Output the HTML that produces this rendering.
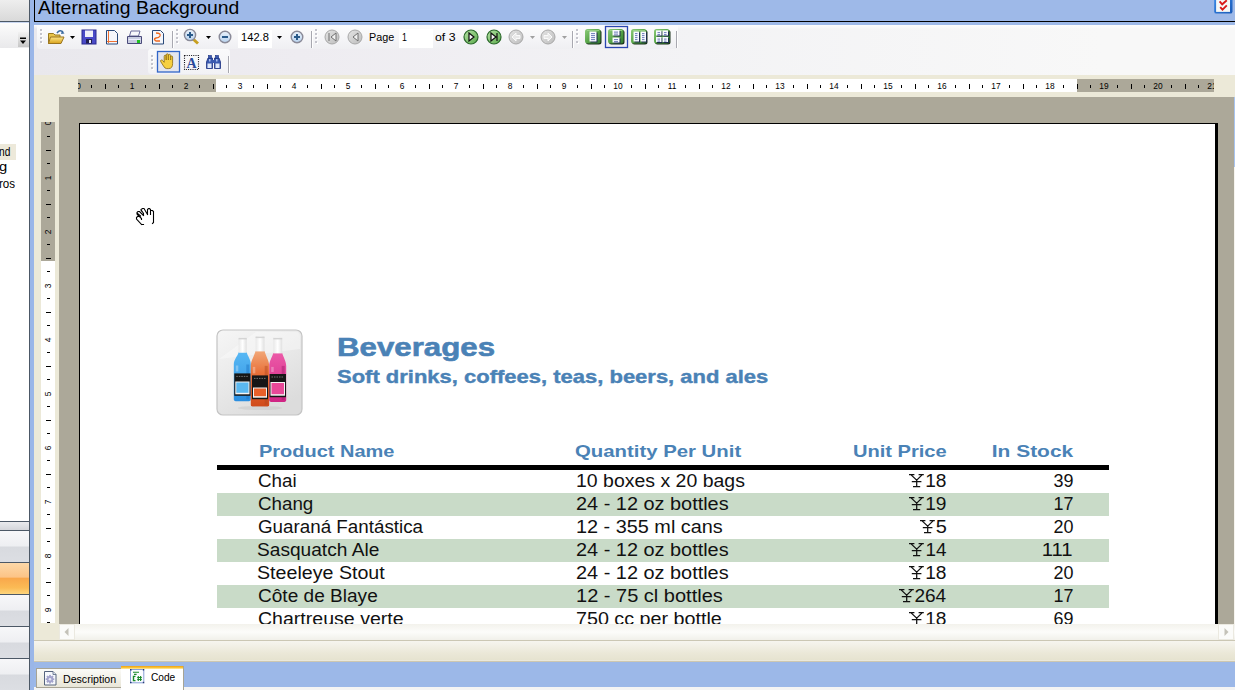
<!DOCTYPE html>
<html><head><meta charset="utf-8">
<style>
*{margin:0;padding:0;box-sizing:border-box}
html,body{width:1235px;height:690px;overflow:hidden;background:#ece9d8;font-family:"Liberation Sans",sans-serif;position:relative}
.a{position:absolute}
.t{position:absolute;white-space:nowrap;line-height:1}
svg{position:absolute;overflow:visible}
.lbtn{position:absolute;left:0;width:29px;height:31px;background:linear-gradient(#f7f7f9 0%,#eeeff2 48%,#d8dadf 52%,#dcdee3 100%)}
</style></head><body>

<div class="a" style="left:0px;top:0px;width:29px;height:21px;background:linear-gradient(#eeeeee,#d9d9d9);"></div>
<div class="a" style="left:0px;top:21px;width:29px;height:1px;background:#4c5866;"></div>
<div class="a" style="left:0px;top:22px;width:29px;height:1px;background:#c8d6f0;"></div>
<div class="a" style="left:0px;top:23px;width:29px;height:25px;background:linear-gradient(#fcfcfc,#e9e9eb);"></div>
<div class="a" style="left:18px;top:32px;width:11px;height:15px;background:linear-gradient(#f2f2f2,#c6c6c6);"></div>
<svg style="left:18px;top:32px" width="11" height="15"><rect x="2" y="5.5" width="6" height="1.5" fill="#000"/><path d="M2 8.5 H8 L5 12 Z" fill="#000"/></svg>
<div class="a" style="left:0px;top:48px;width:29px;height:473px;background:#fff;"></div>
<div class="a" style="left:0px;top:144px;width:16px;height:16px;background:#ede9da;"></div>
<div id="ln1" class="t" style="left:-0.86px;top:145.84px;font-size:12.3px;font-weight:normal;color:#000;font-family:'Liberation Sans',sans-serif;transform:scaleX(0.8264);transform-origin:0 0;">nd</div>
<div id="ln2" class="t" style="left:-0.86px;top:161.34px;font-size:12.3px;font-weight:normal;color:#000;font-family:'Liberation Sans',sans-serif;transform:scaleX(1.2000);transform-origin:0 0;">g</div>
<div id="ln3" class="t" style="left:-0.86px;top:178.15px;font-size:12.3px;font-weight:normal;color:#000;font-family:'Liberation Sans',sans-serif;transform:scaleX(0.9417);transform-origin:0 0;">ros</div>
<div class="a" style="left:0px;top:521px;width:29px;height:169px;background:#4c5866;"></div>
<div class="a" style="left:0px;top:522px;width:29px;height:8px;background:linear-gradient(#e9eaed,#d3d5da);"></div>
<div class="lbtn" style="top:531px"></div>
<div class="lbtn" style="top:595px"></div>
<div class="lbtn" style="top:627px"></div>
<div class="lbtn" style="top:659px"></div>
<div class="a" style="left:0px;top:563px;width:29px;height:31px;background:linear-gradient(#fdd8a8 0%,#fcc487 45%,#f9a84c 50%,#fbbb55 80%,#fdd57d 100%);"></div>
<div class="a" style="left:29px;top:0px;width:1px;height:690px;background:#4c5866;"></div>
<div class="a" style="left:30px;top:0px;width:4px;height:690px;background:#9ab6e8;"></div>
<div class="a" style="left:34px;top:0px;width:1201px;height:25px;background:#9eb9e8;"></div>
<div class="a" style="left:34px;top:0px;width:1px;height:22px;background:#000;"></div>
<div class="a" style="left:34px;top:21px;width:1201px;height:1px;background:#000;"></div>
<div id="title" class="t" style="left:37.70px;top:-0.53px;font-size:18.5px;font-weight:normal;color:#000;font-family:'Liberation Sans',sans-serif;transform:scaleX(1.0471);transform-origin:0 0;">Alternating Background</div>
<svg style="left:1214px;top:0px" width="20" height="16">
<defs><linearGradient id="ck" x1="0" y1="0" x2="1" y2="1"><stop offset="0" stop-color="#3a8ae8"/><stop offset="1" stop-color="#1a5ab8"/></linearGradient></defs>
<rect x="0.2" y="-4" width="18.3" height="17.6" rx="2.2" fill="url(#ck)"/>
<rect x="2.1" y="-3" width="13.9" height="14.9" fill="#f6f8f6"/>
<path d="M5.6 1.4 L8.2 4.3 L12.8 0.3 M6.2 7.2 L8.5 9.6 L12.8 5.4" stroke="#d81818" stroke-width="1.9" fill="none"/>
</svg>
<div class="a" style="left:34px;top:25px;width:1201px;height:50px;background:linear-gradient(to right,#e9e8ed 0%,#eeecf1 22%,#f3f3f5 55%,#f8f8f8 89%,#f8f8f8 100%);"></div>
<div class="a" style="left:34px;top:25px;width:1201px;height:4px;background:linear-gradient(#fdfdfd,rgba(255,255,255,0));"></div>
<div class="a" style="left:37px;top:25px;width:641px;height:24px;background:linear-gradient(#fcfcfd,#f6f6f8 50%,#efeff2);border-radius:0 0 3px 3px"></div>
<div class="a" style="left:148px;top:49px;width:82px;height:25px;background:linear-gradient(#fafafb,#f2f2f5);border-radius:3px"></div>
<svg style="left:0;top:0" width="1235" height="80"><defs><linearGradient id="gg" x1="0" y1="0" x2="1" y2="1"><stop offset="0" stop-color="#e4e4e4"/><stop offset="1" stop-color="#bdbdbd"/></linearGradient><linearGradient id="gr" x1="0" y1="0" x2="1" y2="1"><stop offset="0" stop-color="#b8e4a8"/><stop offset="1" stop-color="#5aaa4a"/></linearGradient><linearGradient id="gb" x1="0" y1="0" x2="0" y2="1"><stop offset="0" stop-color="#eaf2fb"/><stop offset="1" stop-color="#b8d2ee"/></linearGradient><linearGradient id="gf" x1="0" y1="0" x2="0" y2="1"><stop offset="0" stop-color="#fde68a"/><stop offset="1" stop-color="#d9a21a"/></linearGradient><linearGradient id="gl" x1="0" y1="0" x2="1" y2="1"><stop offset="0" stop-color="#8ccc7a"/><stop offset=".5" stop-color="#5aa64a"/><stop offset="1" stop-color="#2f7a30"/></linearGradient></defs><rect x="41" y="30" width="2" height="2" fill="#fff"/><rect x="40" y="29" width="2" height="2" fill="#c4c4cc"/><rect x="41" y="34" width="2" height="2" fill="#fff"/><rect x="40" y="33" width="2" height="2" fill="#c4c4cc"/><rect x="41" y="38" width="2" height="2" fill="#fff"/><rect x="40" y="37" width="2" height="2" fill="#c4c4cc"/><rect x="41" y="42" width="2" height="2" fill="#fff"/><rect x="40" y="41" width="2" height="2" fill="#c4c4cc"/><path d="M48.5 33.5 h5 l1.5 1.5 h5 v8.5 h-11.5 z" fill="#e8c44a" stroke="#9a7a20" stroke-width="1"/><path d="M50.5 37 h13.5 l-3 6.5 h-12.5 z" fill="url(#gf)" stroke="#9a7420" stroke-width="1"/><path d="M57 33 q3 -4 6 -1" stroke="#3a6aa0" stroke-width="1.6" fill="none"/><path d="M62 30.5 l2.5 3 l-3.5 .5 z" fill="#3a6aa0"/><path d="M70 36 h5 l-2.5 3 z" fill="#000"/><rect x="82" y="30" width="14" height="14" fill="#4a4ac8" stroke="#2a2a90" stroke-width="1"/><rect x="85" y="30.5" width="8" height="6.5" fill="#f0f0f8"/><rect x="86" y="39" width="6" height="4.5" fill="#202050"/><rect x="89" y="40" width="2" height="3" fill="#e8e8f0"/><path d="M106.5 30.5 h8 l3 3 v10.5 h-11 z" fill="#f4f6fb" stroke="#2a4a7a" stroke-width="1"/><rect x="108" y="31" width="1" height="12" fill="#f07030"/><rect x="107" y="41" width="10" height="1" fill="#f07030"/><path d="M131 31 h9 l-1.5 5 h-9 z" fill="#f8f8fc" stroke="#6a6a9a" stroke-width="1"/><path d="M127.5 36.5 h14 v7 h-14 z" fill="#c8cce0" stroke="#4a4a7a" stroke-width="1"/><rect x="128.5" y="39" width="12" height="1" fill="#eef"/><rect x="137" y="40" width="3" height="3" fill="#20c020"/><path d="M152.5 30.5 h8 l3 3 v10.5 h-11 z" fill="#f4f6fb" stroke="#2a4a7a" stroke-width="1"/><path d="M156 33 q5 0 4 3 q-1 2 -4 2 q-3 1 0 3 h4" stroke="#f06a20" stroke-width="1.4" fill="none"/><rect x="172" y="31" width="1" height="17" fill="#a8a8b0"/><rect x="173" y="31" width="1" height="17" fill="#fff"/><rect x="177" y="30" width="2" height="2" fill="#fff"/><rect x="176" y="29" width="2" height="2" fill="#c4c4cc"/><rect x="177" y="34" width="2" height="2" fill="#fff"/><rect x="176" y="33" width="2" height="2" fill="#c4c4cc"/><rect x="177" y="38" width="2" height="2" fill="#fff"/><rect x="176" y="37" width="2" height="2" fill="#c4c4cc"/><rect x="177" y="42" width="2" height="2" fill="#fff"/><rect x="176" y="41" width="2" height="2" fill="#c4c4cc"/><path d="M193 39 l5 4.5" stroke="#c8a020" stroke-width="3"/><circle cx="190" cy="35" r="5.6" fill="url(#gb)" stroke="#8a8a98" stroke-width="1.4"/><path d="M190 32 v6 M187 35 h6" stroke="#2a5a8a" stroke-width="2"/><path d="M206 36 h5 l-2.5 3 z" fill="#000"/><circle cx="225" cy="37" r="5.8" fill="url(#gb)" stroke="#8a8a98" stroke-width="1.4"/><path d="M222 37 h6" stroke="#2a5a8a" stroke-width="2"/><rect x="238" y="30" width="34" height="18" fill="#fff"/><path d="M277 36 h5 l-2.5 3 z" fill="#000"/><circle cx="297" cy="37" r="5.8" fill="url(#gb)" stroke="#8a8a98" stroke-width="1.4"/><path d="M297 34 v6 M294 37 h6" stroke="#2a5a8a" stroke-width="2"/><rect x="311" y="31" width="1" height="17" fill="#a8a8b0"/><rect x="312" y="31" width="1" height="17" fill="#fff"/><rect x="316" y="30" width="2" height="2" fill="#fff"/><rect x="315" y="29" width="2" height="2" fill="#c4c4cc"/><rect x="316" y="34" width="2" height="2" fill="#fff"/><rect x="315" y="33" width="2" height="2" fill="#c4c4cc"/><rect x="316" y="38" width="2" height="2" fill="#fff"/><rect x="315" y="37" width="2" height="2" fill="#c4c4cc"/><rect x="316" y="42" width="2" height="2" fill="#fff"/><rect x="315" y="41" width="2" height="2" fill="#c4c4cc"/><circle cx="332" cy="37" r="7" fill="url(#gg)" stroke="#a8a8a8" stroke-width="1"/><path d="M329 33 v8 M336 33 l-5 4 l5 4 z" stroke="#707070" stroke-width="1" fill="#f0f0f0"/><circle cx="355" cy="37" r="7" fill="url(#gg)" stroke="#a8a8a8" stroke-width="1"/><path d="M358 33 l-5 4 l5 4 z" stroke="#707070" stroke-width="1" fill="#f0f0f0"/><rect x="399" y="29" width="34" height="19" fill="#fff"/><circle cx="471" cy="37" r="7" fill="url(#gr)" stroke="#2c6a2c" stroke-width="1.2"/><path d="M469 33 l5 4 l-5 4 z" stroke="#101010" stroke-width="1.2" fill="#f4f4f4"/><circle cx="494" cy="37" r="7" fill="url(#gr)" stroke="#2c6a2c" stroke-width="1.2"/><path d="M491 33 l5 4 l-5 4 z M497 33 v8" stroke="#101010" stroke-width="1.2" fill="#f4f4f4"/><circle cx="516" cy="37" r="7" fill="url(#gg)" stroke="#a8a8a8" stroke-width="1"/><path d="M512 37 l4 -4 v2.5 h4 v3 h-4 v2.5 z" fill="#e8e8e8" stroke="#fafafa" stroke-width="1"/><path d="M530 36 h5 l-2.5 3 z" fill="#a0a0a0"/><circle cx="548" cy="37" r="7" fill="url(#gg)" stroke="#a8a8a8" stroke-width="1"/><path d="M552 37 l-4 -4 v2.5 h-4 v3 h4 v2.5 z" fill="#e8e8e8" stroke="#fafafa" stroke-width="1"/><path d="M562 36 h5 l-2.5 3 z" fill="#a0a0a0"/><rect x="572" y="31" width="1" height="17" fill="#a8a8b0"/><rect x="573" y="31" width="1" height="17" fill="#fff"/><rect x="577" y="30" width="2" height="2" fill="#fff"/><rect x="576" y="29" width="2" height="2" fill="#c4c4cc"/><rect x="577" y="34" width="2" height="2" fill="#fff"/><rect x="576" y="33" width="2" height="2" fill="#c4c4cc"/><rect x="577" y="38" width="2" height="2" fill="#fff"/><rect x="576" y="37" width="2" height="2" fill="#c4c4cc"/><rect x="577" y="42" width="2" height="2" fill="#fff"/><rect x="576" y="41" width="2" height="2" fill="#c4c4cc"/><rect x="605.5" y="26.5" width="22" height="21" fill="#f2f2f6" stroke="#2a46b0" stroke-width="1.3"/><rect x="586" y="30" width="15.5" height="14.5" rx="2.5" fill="#1a301a"/><rect x="585" y="29" width="15.5" height="14.5" rx="2.5" fill="url(#gl)"/><path d="M587 30.5 H599" stroke="#a8dc98" stroke-width="1" opacity=".7"/><rect x="590.5" y="32.5" width="7" height="10" fill="#1c2c4c"/><rect x="589.5" y="31.5" width="7" height="10" fill="#f8faff"/><rect x="591.0" y="33.1" width="4" height="1" fill="#6a7ab8"/><rect x="591.0" y="35.1" width="4" height="1" fill="#6a7ab8"/><rect x="591.0" y="37.1" width="4" height="1" fill="#6a7ab8"/><rect x="591.0" y="39.1" width="4" height="1" fill="#6a7ab8"/><rect x="609" y="30" width="15.5" height="14.5" rx="2.5" fill="#1a301a"/><rect x="608" y="29" width="15.5" height="14.5" rx="2.5" fill="url(#gl)"/><path d="M610 30.5 H622" stroke="#a8dc98" stroke-width="1" opacity=".7"/><rect x="613.5" y="31" width="7" height="5.5" fill="#1c2c4c"/><rect x="612.5" y="30" width="7" height="5.5" fill="#f8faff"/><rect x="614.0" y="31.6" width="4" height="1" fill="#6a7ab8"/><rect x="614.0" y="33.6" width="4" height="1" fill="#6a7ab8"/><rect x="613.5" y="38.5" width="7" height="5" fill="#1c2c4c"/><rect x="612.5" y="37.5" width="7" height="5" fill="#f8faff"/><rect x="614.0" y="39.1" width="4" height="1" fill="#6a7ab8"/><rect x="614.0" y="41.1" width="4" height="1" fill="#6a7ab8"/><rect x="632" y="30" width="15.5" height="14.5" rx="2.5" fill="#1a301a"/><rect x="631" y="29" width="15.5" height="14.5" rx="2.5" fill="url(#gl)"/><path d="M633 30.5 H645" stroke="#a8dc98" stroke-width="1" opacity=".7"/><rect x="634.5" y="32.5" width="5.5" height="10" fill="#1c2c4c"/><rect x="633.5" y="31.5" width="5.5" height="10" fill="#f8faff"/><rect x="635.0" y="33.1" width="2.5" height="1" fill="#6a7ab8"/><rect x="635.0" y="35.1" width="2.5" height="1" fill="#6a7ab8"/><rect x="635.0" y="37.1" width="2.5" height="1" fill="#6a7ab8"/><rect x="635.0" y="39.1" width="2.5" height="1" fill="#6a7ab8"/><rect x="641.5" y="32.5" width="5.5" height="10" fill="#1c2c4c"/><rect x="640.5" y="31.5" width="5.5" height="10" fill="#f8faff"/><rect x="642.0" y="33.1" width="2.5" height="1" fill="#6a7ab8"/><rect x="642.0" y="35.1" width="2.5" height="1" fill="#6a7ab8"/><rect x="642.0" y="37.1" width="2.5" height="1" fill="#6a7ab8"/><rect x="642.0" y="39.1" width="2.5" height="1" fill="#6a7ab8"/><rect x="655" y="30" width="15.5" height="14.5" rx="2.5" fill="#1a301a"/><rect x="654" y="29" width="15.5" height="14.5" rx="2.5" fill="url(#gl)"/><path d="M656 30.5 H668" stroke="#a8dc98" stroke-width="1" opacity=".7"/><rect x="657" y="31.5" width="5.5" height="5" fill="#1c2c4c"/><rect x="656" y="30.5" width="5.5" height="5" fill="#f8faff"/><rect x="657.5" y="32.1" width="2.5" height="1" fill="#6a7ab8"/><rect x="657.5" y="34.1" width="2.5" height="1" fill="#6a7ab8"/><rect x="663.5" y="31.5" width="5.5" height="5" fill="#1c2c4c"/><rect x="662.5" y="30.5" width="5.5" height="5" fill="#f8faff"/><rect x="664.0" y="32.1" width="2.5" height="1" fill="#6a7ab8"/><rect x="664.0" y="34.1" width="2.5" height="1" fill="#6a7ab8"/><rect x="657" y="38" width="5.5" height="5" fill="#1c2c4c"/><rect x="656" y="37" width="5.5" height="5" fill="#f8faff"/><rect x="657.5" y="38.6" width="2.5" height="1" fill="#6a7ab8"/><rect x="657.5" y="40.6" width="2.5" height="1" fill="#6a7ab8"/><rect x="663.5" y="38" width="5.5" height="5" fill="#1c2c4c"/><rect x="662.5" y="37" width="5.5" height="5" fill="#f8faff"/><rect x="664.0" y="38.6" width="2.5" height="1" fill="#6a7ab8"/><rect x="664.0" y="40.6" width="2.5" height="1" fill="#6a7ab8"/><rect x="676" y="31" width="1" height="17" fill="#a8a8b0"/><rect x="677" y="31" width="1" height="17" fill="#fff"/><rect x="152" y="56" width="2" height="2" fill="#fff"/><rect x="151" y="55" width="2" height="2" fill="#c4c4cc"/><rect x="152" y="60" width="2" height="2" fill="#fff"/><rect x="151" y="59" width="2" height="2" fill="#c4c4cc"/><rect x="152" y="64" width="2" height="2" fill="#fff"/><rect x="151" y="63" width="2" height="2" fill="#c4c4cc"/><rect x="152" y="68" width="2" height="2" fill="#fff"/><rect x="151" y="67" width="2" height="2" fill="#c4c4cc"/><rect x="157.5" y="51.5" width="22" height="20.5" fill="#e4e6ee" stroke="#3166c8" stroke-width="1.3"/><path d="M163.5 66 L160.8 61.8 Q160 60.3 161.3 60 Q162.3 59.8 163.2 61 L164.2 62.3 V56.3 Q164.2 55.2 165.2 55.2 Q166.2 55.2 166.2 56.3 V60 V55 Q166.2 53.8 167.3 53.8 Q168.4 53.8 168.4 55 V60 V55.5 Q168.4 54.4 169.5 54.4 Q170.6 54.4 170.6 55.5 V60 V57 Q170.6 56 171.6 56 Q172.6 56 172.6 57 V63.5 Q172.6 68.6 168.6 68.6 H166.6 Q164.8 68.6 163.5 66 Z" fill="#f6d040" stroke="#8a6a10" stroke-width=".8"/><path d="M166.2 59.5 V56 M168.4 59.5 V55.5 M170.6 59.5 V57" stroke="#b89020" stroke-width=".6"/><rect x="184.5" y="55.5" width="14" height="14" fill="none" stroke="#101018" stroke-width="1.1" stroke-dasharray="1 1.2"/><text x="191.5" y="68" font-family="Liberation Serif" font-weight="bold" font-size="14" fill="#2a4a9a" text-anchor="middle">A</text><path d="M206.5 68.5 V62 L208 58 H212.5 V68.5 Z M214.5 68.5 V58 H219 L220.5 62 V68.5 Z" fill="#3a5ab0" stroke="#1a3080" stroke-width=".8"/><rect x="208.5" y="55.5" width="3" height="3" fill="#3a5ab0" stroke="#1a3080" stroke-width=".6"/><rect x="215.5" y="55.5" width="3" height="3" fill="#3a5ab0" stroke="#1a3080" stroke-width=".6"/><rect x="212" y="60" width="3" height="3" fill="#3a5ab0"/><rect x="207.5" y="63.5" width="4" height="4.5" fill="#dfe8f8"/><rect x="215.5" y="63.5" width="4" height="4.5" fill="#dfe8f8"/><rect x="209" y="59" width="1.5" height="2.5" fill="#a8c0f0"/><rect x="216" y="59" width="1.5" height="2.5" fill="#a8c0f0"/><rect x="228" y="56" width="1" height="17" fill="#a8a8b0"/><rect x="229" y="56" width="1" height="17" fill="#fff"/></svg>
<div id="zoomtxt" class="t" style="left:240.63px;top:32.25px;font-size:11px;font-weight:normal;color:#000;font-family:'Liberation Sans',sans-serif;transform:scaleX(1.0127);transform-origin:0 0;">142.8</div>
<div id="pagetxt" class="t" style="left:368.73px;top:32.25px;font-size:11px;font-weight:normal;color:#000;font-family:'Liberation Sans',sans-serif;transform:scaleX(0.9809);transform-origin:0 0;">Page</div>
<div id="pgnum" class="t" style="left:402.23px;top:32.25px;font-size:11px;font-weight:normal;color:#000;font-family:'Liberation Sans',sans-serif;transform:scaleX(0.8000);transform-origin:0 0;">1</div>
<div id="oftxt" class="t" style="left:435.23px;top:32.25px;font-size:11px;font-weight:normal;color:#000;font-family:'Liberation Sans',sans-serif;transform:scaleX(1.1176);transform-origin:0 0;">of 3</div>
<div class="a" style="left:34px;top:75px;width:1201px;height:22px;background:#ece9d8;"></div>
<div class="a" style="left:78px;top:79px;width:1136px;height:13px;background:#fff;"></div>
<div class="a" style="left:78px;top:79px;width:138px;height:13px;background:#aca899;"></div>
<div class="a" style="left:1077px;top:79px;width:137px;height:13px;background:#aca899;"></div>
<svg style="left:0;top:0" width="1235" height="690"><rect x="91" y="85" width="1" height="3" fill="#000"/><rect x="105" y="84" width="1" height="5" fill="#000"/><rect x="118" y="85" width="1" height="3" fill="#000"/><rect x="145" y="85" width="1" height="3" fill="#000"/><rect x="159" y="84" width="1" height="5" fill="#000"/><rect x="172" y="85" width="1" height="3" fill="#000"/><rect x="199" y="85" width="1" height="3" fill="#000"/><rect x="213" y="84" width="1" height="5" fill="#000"/><rect x="226" y="85" width="1" height="3" fill="#000"/><rect x="253" y="85" width="1" height="3" fill="#000"/><rect x="267" y="84" width="1" height="5" fill="#000"/><rect x="280" y="85" width="1" height="3" fill="#000"/><rect x="307" y="85" width="1" height="3" fill="#000"/><rect x="321" y="84" width="1" height="5" fill="#000"/><rect x="334" y="85" width="1" height="3" fill="#000"/><rect x="361" y="85" width="1" height="3" fill="#000"/><rect x="375" y="84" width="1" height="5" fill="#000"/><rect x="388" y="85" width="1" height="3" fill="#000"/><rect x="415" y="85" width="1" height="3" fill="#000"/><rect x="429" y="84" width="1" height="5" fill="#000"/><rect x="442" y="85" width="1" height="3" fill="#000"/><rect x="469" y="85" width="1" height="3" fill="#000"/><rect x="483" y="84" width="1" height="5" fill="#000"/><rect x="496" y="85" width="1" height="3" fill="#000"/><rect x="523" y="85" width="1" height="3" fill="#000"/><rect x="537" y="84" width="1" height="5" fill="#000"/><rect x="550" y="85" width="1" height="3" fill="#000"/><rect x="577" y="85" width="1" height="3" fill="#000"/><rect x="591" y="84" width="1" height="5" fill="#000"/><rect x="604" y="85" width="1" height="3" fill="#000"/><rect x="631" y="85" width="1" height="3" fill="#000"/><rect x="645" y="84" width="1" height="5" fill="#000"/><rect x="658" y="85" width="1" height="3" fill="#000"/><rect x="685" y="85" width="1" height="3" fill="#000"/><rect x="699" y="84" width="1" height="5" fill="#000"/><rect x="712" y="85" width="1" height="3" fill="#000"/><rect x="739" y="85" width="1" height="3" fill="#000"/><rect x="753" y="84" width="1" height="5" fill="#000"/><rect x="766" y="85" width="1" height="3" fill="#000"/><rect x="793" y="85" width="1" height="3" fill="#000"/><rect x="807" y="84" width="1" height="5" fill="#000"/><rect x="820" y="85" width="1" height="3" fill="#000"/><rect x="847" y="85" width="1" height="3" fill="#000"/><rect x="861" y="84" width="1" height="5" fill="#000"/><rect x="874" y="85" width="1" height="3" fill="#000"/><rect x="901" y="85" width="1" height="3" fill="#000"/><rect x="915" y="84" width="1" height="5" fill="#000"/><rect x="928" y="85" width="1" height="3" fill="#000"/><rect x="955" y="85" width="1" height="3" fill="#000"/><rect x="969" y="84" width="1" height="5" fill="#000"/><rect x="982" y="85" width="1" height="3" fill="#000"/><rect x="1009" y="85" width="1" height="3" fill="#000"/><rect x="1023" y="84" width="1" height="5" fill="#000"/><rect x="1036" y="85" width="1" height="3" fill="#000"/><rect x="1063" y="85" width="1" height="3" fill="#000"/><rect x="1077" y="84" width="1" height="5" fill="#000"/><rect x="1090" y="85" width="1" height="3" fill="#000"/><rect x="1117" y="85" width="1" height="3" fill="#000"/><rect x="1131" y="84" width="1" height="5" fill="#000"/><rect x="1144" y="85" width="1" height="3" fill="#000"/><rect x="1171" y="85" width="1" height="3" fill="#000"/><rect x="1185" y="84" width="1" height="5" fill="#000"/><rect x="1198" y="85" width="1" height="3" fill="#000"/></svg>
<div class="t" style="left:131.8px;top:80.5px;font-size:9.5px;color:#000;transform:translateX(-50%) scaleX(0.88)">1</div>
<div class="t" style="left:185.8px;top:80.5px;font-size:9.5px;color:#000;transform:translateX(-50%) scaleX(0.88)">2</div>
<div class="t" style="left:239.8px;top:80.5px;font-size:9.5px;color:#000;transform:translateX(-50%) scaleX(0.88)">3</div>
<div class="t" style="left:293.8px;top:80.5px;font-size:9.5px;color:#000;transform:translateX(-50%) scaleX(0.88)">4</div>
<div class="t" style="left:347.8px;top:80.5px;font-size:9.5px;color:#000;transform:translateX(-50%) scaleX(0.88)">5</div>
<div class="t" style="left:401.8px;top:80.5px;font-size:9.5px;color:#000;transform:translateX(-50%) scaleX(0.88)">6</div>
<div class="t" style="left:455.8px;top:80.5px;font-size:9.5px;color:#000;transform:translateX(-50%) scaleX(0.88)">7</div>
<div class="t" style="left:509.8px;top:80.5px;font-size:9.5px;color:#000;transform:translateX(-50%) scaleX(0.88)">8</div>
<div class="t" style="left:563.8px;top:80.5px;font-size:9.5px;color:#000;transform:translateX(-50%) scaleX(0.88)">9</div>
<div class="t" style="left:617.8px;top:80.5px;font-size:9.5px;color:#000;transform:translateX(-50%) scaleX(0.88)">10</div>
<div class="t" style="left:671.8px;top:80.5px;font-size:9.5px;color:#000;transform:translateX(-50%) scaleX(0.88)">11</div>
<div class="t" style="left:725.8px;top:80.5px;font-size:9.5px;color:#000;transform:translateX(-50%) scaleX(0.88)">12</div>
<div class="t" style="left:779.8px;top:80.5px;font-size:9.5px;color:#000;transform:translateX(-50%) scaleX(0.88)">13</div>
<div class="t" style="left:833.8px;top:80.5px;font-size:9.5px;color:#000;transform:translateX(-50%) scaleX(0.88)">14</div>
<div class="t" style="left:887.8px;top:80.5px;font-size:9.5px;color:#000;transform:translateX(-50%) scaleX(0.88)">15</div>
<div class="t" style="left:941.8px;top:80.5px;font-size:9.5px;color:#000;transform:translateX(-50%) scaleX(0.88)">16</div>
<div class="t" style="left:995.8px;top:80.5px;font-size:9.5px;color:#000;transform:translateX(-50%) scaleX(0.88)">17</div>
<div class="t" style="left:1049.8px;top:80.5px;font-size:9.5px;color:#000;transform:translateX(-50%) scaleX(0.88)">18</div>
<div class="t" style="left:1103.8px;top:80.5px;font-size:9.5px;color:#000;transform:translateX(-50%) scaleX(0.88)">19</div>
<div class="t" style="left:1157.8px;top:80.5px;font-size:9.5px;color:#000;transform:translateX(-50%) scaleX(0.88)">20</div>
<div class="a" style="left:1190px;top:79px;width:24px;height:13px;overflow:hidden"><div class="t" style="left:21.8px;top:1.5px;font-size:9.5px;color:#000;transform:translateX(-50%) scaleX(0.88)">21</div></div>
<div class="a" style="left:78px;top:79px;width:3px;height:13px;overflow:hidden"><div class="t" style="left:-2.5px;top:1.5px;font-size:9.5px;color:#000;transform:scaleX(0.88)">0</div></div>
<div class="a" style="left:59px;top:97px;width:1175px;height:527px;background:#aca899;"></div>
<div class="a" style="left:1234px;top:97px;width:1px;height:527px;background:#f6f4ee;"></div>
<div class="a" style="left:1234px;top:97px;width:1px;height:70px;background:#a8c4f0;"></div>
<div class="a" style="left:41px;top:122px;width:14px;height:501px;background:#fff;"></div>
<div class="a" style="left:41px;top:122px;width:14px;height:139px;background:#aca899;"></div>
<svg style="left:0;top:0" width="1235" height="690"><rect x="47" y="136" width="3" height="1" fill="#000"/><rect x="46" y="150" width="5" height="1" fill="#000"/><rect x="47" y="163" width="3" height="1" fill="#000"/><rect x="47" y="190" width="3" height="1" fill="#000"/><rect x="46" y="204" width="5" height="1" fill="#000"/><rect x="47" y="217" width="3" height="1" fill="#000"/><rect x="47" y="244" width="3" height="1" fill="#000"/><rect x="46" y="258" width="5" height="1" fill="#000"/><rect x="47" y="271" width="3" height="1" fill="#000"/><rect x="47" y="298" width="3" height="1" fill="#000"/><rect x="46" y="312" width="5" height="1" fill="#000"/><rect x="47" y="325" width="3" height="1" fill="#000"/><rect x="47" y="352" width="3" height="1" fill="#000"/><rect x="46" y="366" width="5" height="1" fill="#000"/><rect x="47" y="379" width="3" height="1" fill="#000"/><rect x="47" y="406" width="3" height="1" fill="#000"/><rect x="46" y="420" width="5" height="1" fill="#000"/><rect x="47" y="433" width="3" height="1" fill="#000"/><rect x="47" y="460" width="3" height="1" fill="#000"/><rect x="46" y="474" width="5" height="1" fill="#000"/><rect x="47" y="487" width="3" height="1" fill="#000"/><rect x="47" y="514" width="3" height="1" fill="#000"/><rect x="46" y="528" width="5" height="1" fill="#000"/><rect x="47" y="541" width="3" height="1" fill="#000"/><rect x="47" y="568" width="3" height="1" fill="#000"/><rect x="46" y="582" width="5" height="1" fill="#000"/><rect x="47" y="595" width="3" height="1" fill="#000"/><rect x="47" y="622" width="3" height="1" fill="#000"/></svg>
<div class="t" style="left:43px;top:172.5px;font-size:9.5px;color:#000;transform:rotate(-90deg) scaleX(0.88);transform-origin:5px 5px;width:10px;text-align:center">1</div>
<div class="t" style="left:43px;top:226.5px;font-size:9.5px;color:#000;transform:rotate(-90deg) scaleX(0.88);transform-origin:5px 5px;width:10px;text-align:center">2</div>
<div class="t" style="left:43px;top:280.5px;font-size:9.5px;color:#000;transform:rotate(-90deg) scaleX(0.88);transform-origin:5px 5px;width:10px;text-align:center">3</div>
<div class="t" style="left:43px;top:334.5px;font-size:9.5px;color:#000;transform:rotate(-90deg) scaleX(0.88);transform-origin:5px 5px;width:10px;text-align:center">4</div>
<div class="t" style="left:43px;top:388.5px;font-size:9.5px;color:#000;transform:rotate(-90deg) scaleX(0.88);transform-origin:5px 5px;width:10px;text-align:center">5</div>
<div class="t" style="left:43px;top:442.5px;font-size:9.5px;color:#000;transform:rotate(-90deg) scaleX(0.88);transform-origin:5px 5px;width:10px;text-align:center">6</div>
<div class="t" style="left:43px;top:496.5px;font-size:9.5px;color:#000;transform:rotate(-90deg) scaleX(0.88);transform-origin:5px 5px;width:10px;text-align:center">7</div>
<div class="t" style="left:43px;top:550.5px;font-size:9.5px;color:#000;transform:rotate(-90deg) scaleX(0.88);transform-origin:5px 5px;width:10px;text-align:center">8</div>
<div class="t" style="left:43px;top:604.5px;font-size:9.5px;color:#000;transform:rotate(-90deg) scaleX(0.88);transform-origin:5px 5px;width:10px;text-align:center">9</div>
<div class="a" style="left:41px;top:122px;width:14px;height:4px;overflow:hidden"><div class="t" style="left:2px;top:-4px;font-size:9.5px;transform:rotate(-90deg) scaleX(0.88);transform-origin:5px 5px;width:10px;text-align:center">0</div></div>
<div class="a" style="left:79px;top:123px;width:1139px;height:501px;background:#fff;border-left:1px solid #000;border-top:1px solid #000;border-right:3px solid #000;overflow:hidden"></div>
<svg style="left:216px;top:329px" width="88" height="87"><defs><linearGradient id="ib" x1="0" y1="0" x2=".6" y2="1"><stop offset="0" stop-color="#f6f6f6"/><stop offset=".45" stop-color="#ebebeb"/><stop offset="1" stop-color="#dcdcdc"/></linearGradient><linearGradient id="bo" x1="0" y1="0" x2="0" y2="1"><stop offset="0" stop-color="#f2a878"/><stop offset=".4" stop-color="#e87038"/><stop offset="1" stop-color="#d04a1a"/></linearGradient><linearGradient id="bb" x1="0" y1="0" x2="0" y2="1"><stop offset="0" stop-color="#58b8f4"/><stop offset="1" stop-color="#2a8ee0"/></linearGradient><linearGradient id="bp" x1="0" y1="0" x2="0" y2="1"><stop offset="0" stop-color="#ec5aa8"/><stop offset="1" stop-color="#d02484"/></linearGradient><linearGradient id="nk" x1="0" y1="0" x2="1" y2="0"><stop offset="0" stop-color="#e8e8e8"/><stop offset=".5" stop-color="#ffffff"/><stop offset="1" stop-color="#e0e0e0"/></linearGradient></defs><rect x="1" y="1" width="85" height="85" rx="6" fill="url(#ib)" stroke="#c4c4c4" stroke-width="1.2"/><path d="M3 30 L40 3 H80 Q84 3 84 8 V20 Z" fill="#fff" opacity=".35"/><path d="M22.6 23.2 H30.7 C31.7 27.2 34.8 30.5 34.8 35.5 V70.3 Q34.8 72.3 31.8 72.3 H20.8 Q17.8 72.3 17.8 70.3 V35.5 C17.8 30.5 21.6 27.2 22.6 23.2 Z" fill="url(#bb)"/><rect x="22.6" y="8.9" width="8.1" height="14.8" fill="url(#nk)"/><rect x="22.6" y="8.9" width="8.1" height="1.5" fill="#d4d4d4"/><rect x="19.8" y="36.5" width="2.5" height="5.9" fill="#fff" opacity=".3"/><rect x="30.3" y="35.5" width="3" height="34.8" fill="#1a70c0" opacity=".45"/><rect x="18.3" y="44.4" width="16.2" height="22.4" fill="#161616"/><rect x="19.3" y="52.5" width="14.2" height="12.8" fill="#f4f4f4"/><rect x="20.3" y="53.5" width="12.2" height="10.3" fill="#5ab8f0"/><path d="M20.3 47.4h12.2" stroke="#999" stroke-width=".7" stroke-dasharray="1.5 1"/><path d="M57.3 23.9 H66.2 C67.2 27.9 70.2 31.9 70.2 36.9 V71.0 Q70.2 73.0 67.2 73.0 H56.2 Q53.2 73.0 53.2 71.0 V36.9 C53.2 31.9 56.3 27.9 57.3 23.9 Z" fill="url(#bp)"/><rect x="57.3" y="8.9" width="8.9" height="15.5" fill="url(#nk)"/><rect x="57.3" y="8.9" width="8.9" height="1.5" fill="#d4d4d4"/><rect x="55.2" y="37.9" width="2.5" height="5.1" fill="#fff" opacity=".3"/><rect x="65.7" y="36.9" width="3" height="34.1" fill="#a01868" opacity=".45"/><rect x="53.5" y="45.0" width="16.5" height="23.2" fill="#161616"/><rect x="54.5" y="53.0" width="14.5" height="13.7" fill="#f4f4f4"/><rect x="55.5" y="54.0" width="12.5" height="11.2" fill="#e84898"/><path d="M55.5 48.0h12.5" stroke="#999" stroke-width=".7" stroke-dasharray="1.5 1"/><path d="M39.6 21.9 H48.5 C49.5 25.9 53.2 31.9 53.2 36.9 V75.7 Q53.2 77.7 50.2 77.7 H37.8 Q34.8 77.7 34.8 75.7 V36.9 C34.8 31.9 38.6 25.9 39.6 21.9 Z" fill="url(#bo)"/><rect x="39.6" y="7.6" width="8.9" height="14.8" fill="url(#nk)"/><rect x="39.6" y="7.6" width="8.9" height="1.5" fill="#d4d4d4"/><rect x="36.8" y="37.9" width="2.5" height="6.5" fill="#fff" opacity=".3"/><rect x="48.7" y="36.9" width="3" height="38.8" fill="#b04820" opacity=".45"/><rect x="36.0" y="46.4" width="16.0" height="23.8" fill="#161616"/><rect x="37.0" y="58.5" width="14.0" height="10.2" fill="#f4f4f4"/><rect x="38.0" y="59.5" width="12.0" height="7.7" fill="#e8602a"/><path d="M38.0 49.4h12.0" stroke="#999" stroke-width=".7" stroke-dasharray="1.5 1"/><ellipse cx="44" cy="79" rx="22" ry="2" fill="#c8c8c8" opacity=".5"/></svg>
<div id="bev" class="t" style="left:337.24px;top:333.89px;font-size:26.6px;font-weight:bold;color:#4a82b6;font-family:'Liberation Sans',sans-serif;transform:scaleX(1.1751);transform-origin:0 0;-webkit-text-stroke:0.6px #4a82b6;">Beverages</div>
<div id="sub" class="t" style="left:336.57px;top:366.65px;font-size:19px;font-weight:bold;color:#4a82b6;font-family:'Liberation Sans',sans-serif;transform:scaleX(1.1571);transform-origin:0 0;-webkit-text-stroke:0.4px #4a82b6;">Soft drinks, coffees, teas, beers, and ales</div>
<div id="h1" class="t" style="left:258.59px;top:443.19px;font-size:17.3px;font-weight:bold;color:#4a82b6;font-family:'Liberation Sans',sans-serif;transform:scaleX(1.1561);transform-origin:0 0;">Product Name</div>
<div id="h2" class="t" style="left:575.29px;top:443.19px;font-size:17.3px;font-weight:bold;color:#4a82b6;font-family:'Liberation Sans',sans-serif;transform:scaleX(1.1773);transform-origin:0 0;">Quantity Per Unit</div>
<div id="h3" class="t" style="right:288.79px;top:443.19px;font-size:17.3px;font-weight:bold;color:#4a82b6;font-family:'Liberation Sans',sans-serif;transform:scaleX(1.1626);transform-origin:100% 0;">Unit Price</div>
<div id="h4" class="t" style="right:161.79px;top:443.19px;font-size:17.3px;font-weight:bold;color:#4a82b6;font-family:'Liberation Sans',sans-serif;transform:scaleX(1.2121);transform-origin:100% 0;">In Stock</div>
<div class="a" style="left:217px;top:465px;width:892px;height:5px;background:#000;"></div>
<div class="a" style="left:217px;top:493px;width:892px;height:23px;background:#c9dbc8;"></div>
<div class="a" style="left:217px;top:539px;width:892px;height:23px;background:#c9dbc8;"></div>
<div class="a" style="left:217px;top:585px;width:892px;height:23px;background:#c9dbc8;"></div>
<div id="r0a" class="t" style="left:257.88px;top:472.93px;font-size:17.5px;font-weight:normal;color:#111;font-family:'Liberation Sans',sans-serif;transform:scaleX(1.0755);transform-origin:0 0;">Chai</div>
<div id="r0b" class="t" style="left:575.77px;top:472.93px;font-size:17.5px;font-weight:normal;color:#111;font-family:'Liberation Sans',sans-serif;transform:scaleX(1.1126);transform-origin:0 0;">10 boxes x 20 bags</div>
<svg style="left:909.0px;top:473.1px" width="16" height="15"><path d="M0 1.6 H5.4 M9.6 1.6 H14.8 M1.8 1.6 L7.7 7.2 L13.3 1.6 M2.8 8.5 H12.4 M7.7 7.2 V13.6 M4 13.5 H11.2" fill="none" stroke="#111" stroke-width="1.25"/></svg>
<div id="r0c" class="t" style="right:288.47px;top:472.93px;font-size:17.5px;font-weight:normal;color:#111;font-family:'Liberation Sans',sans-serif;transform:scaleX(1.0941);transform-origin:100% 0;">18</div>
<div id="r0d" class="t" style="right:161.97px;top:472.93px;font-size:17.5px;font-weight:normal;color:#111;font-family:'Liberation Sans',sans-serif;transform:scaleX(1.0251);transform-origin:100% 0;">39</div>
<div id="r1a" class="t" style="left:257.88px;top:495.93px;font-size:17.5px;font-weight:normal;color:#111;font-family:'Liberation Sans',sans-serif;transform:scaleX(1.0724);transform-origin:0 0;">Chang</div>
<div id="r1b" class="t" style="left:575.77px;top:495.93px;font-size:17.5px;font-weight:normal;color:#111;font-family:'Liberation Sans',sans-serif;transform:scaleX(1.1369);transform-origin:0 0;">24 - 12 oz bottles</div>
<svg style="left:909.0px;top:496.1px" width="16" height="15"><path d="M0 1.6 H5.4 M9.6 1.6 H14.8 M1.8 1.6 L7.7 7.2 L13.3 1.6 M2.8 8.5 H12.4 M7.7 7.2 V13.6 M4 13.5 H11.2" fill="none" stroke="#111" stroke-width="1.25"/></svg>
<div id="r1c" class="t" style="right:288.47px;top:495.93px;font-size:17.5px;font-weight:normal;color:#111;font-family:'Liberation Sans',sans-serif;transform:scaleX(1.0941);transform-origin:100% 0;">19</div>
<div id="r1d" class="t" style="right:161.97px;top:495.93px;font-size:17.5px;font-weight:normal;color:#111;font-family:'Liberation Sans',sans-serif;transform:scaleX(1.0251);transform-origin:100% 0;">17</div>
<div id="r2a" class="t" style="left:257.68px;top:518.92px;font-size:17.5px;font-weight:normal;color:#111;font-family:'Liberation Sans',sans-serif;transform:scaleX(1.0739);transform-origin:0 0;">Guaran&aacute; Fant&aacute;stica</div>
<div id="r2b" class="t" style="left:575.77px;top:518.92px;font-size:17.5px;font-weight:normal;color:#111;font-family:'Liberation Sans',sans-serif;transform:scaleX(1.1344);transform-origin:0 0;">12 - 355 ml cans</div>
<svg style="left:920.2px;top:519.1px" width="16" height="15"><path d="M0 1.6 H5.4 M9.6 1.6 H14.8 M1.8 1.6 L7.7 7.2 L13.3 1.6 M2.8 8.5 H12.4 M7.7 7.2 V13.6 M4 13.5 H11.2" fill="none" stroke="#111" stroke-width="1.25"/></svg>
<div id="r2c" class="t" style="right:288.47px;top:518.92px;font-size:17.5px;font-weight:normal;color:#111;font-family:'Liberation Sans',sans-serif;transform:scaleX(1.1392);transform-origin:100% 0;">5</div>
<div id="r2d" class="t" style="right:161.97px;top:518.92px;font-size:17.5px;font-weight:normal;color:#111;font-family:'Liberation Sans',sans-serif;transform:scaleX(1.0251);transform-origin:100% 0;">20</div>
<div id="r3a" class="t" style="left:257.18px;top:541.92px;font-size:17.5px;font-weight:normal;color:#111;font-family:'Liberation Sans',sans-serif;transform:scaleX(1.0929);transform-origin:0 0;">Sasquatch Ale</div>
<div id="r3b" class="t" style="left:575.77px;top:541.92px;font-size:17.5px;font-weight:normal;color:#111;font-family:'Liberation Sans',sans-serif;transform:scaleX(1.1369);transform-origin:0 0;">24 - 12 oz bottles</div>
<svg style="left:909.0px;top:542.1px" width="16" height="15"><path d="M0 1.6 H5.4 M9.6 1.6 H14.8 M1.8 1.6 L7.7 7.2 L13.3 1.6 M2.8 8.5 H12.4 M7.7 7.2 V13.6 M4 13.5 H11.2" fill="none" stroke="#111" stroke-width="1.25"/></svg>
<div id="r3c" class="t" style="right:288.47px;top:541.92px;font-size:17.5px;font-weight:normal;color:#111;font-family:'Liberation Sans',sans-serif;transform:scaleX(1.0798);transform-origin:100% 0;">14</div>
<div id="r3d" class="t" style="right:161.97px;top:541.92px;font-size:17.5px;font-weight:normal;color:#111;font-family:'Liberation Sans',sans-serif;transform:scaleX(1.1600);transform-origin:100% 0;">111</div>
<div id="r4a" class="t" style="left:257.18px;top:564.92px;font-size:17.5px;font-weight:normal;color:#111;font-family:'Liberation Sans',sans-serif;transform:scaleX(1.1222);transform-origin:0 0;">Steeleye Stout</div>
<div id="r4b" class="t" style="left:575.77px;top:564.92px;font-size:17.5px;font-weight:normal;color:#111;font-family:'Liberation Sans',sans-serif;transform:scaleX(1.1369);transform-origin:0 0;">24 - 12 oz bottles</div>
<svg style="left:909.0px;top:565.1px" width="16" height="15"><path d="M0 1.6 H5.4 M9.6 1.6 H14.8 M1.8 1.6 L7.7 7.2 L13.3 1.6 M2.8 8.5 H12.4 M7.7 7.2 V13.6 M4 13.5 H11.2" fill="none" stroke="#111" stroke-width="1.25"/></svg>
<div id="r4c" class="t" style="right:288.47px;top:564.92px;font-size:17.5px;font-weight:normal;color:#111;font-family:'Liberation Sans',sans-serif;transform:scaleX(1.0941);transform-origin:100% 0;">18</div>
<div id="r4d" class="t" style="right:161.97px;top:564.92px;font-size:17.5px;font-weight:normal;color:#111;font-family:'Liberation Sans',sans-serif;transform:scaleX(1.0251);transform-origin:100% 0;">20</div>
<div id="r5a" class="t" style="left:257.88px;top:587.92px;font-size:17.5px;font-weight:normal;color:#111;font-family:'Liberation Sans',sans-serif;transform:scaleX(1.0891);transform-origin:0 0;">C&ocirc;te de Blaye</div>
<div id="r5b" class="t" style="left:575.77px;top:587.92px;font-size:17.5px;font-weight:normal;color:#111;font-family:'Liberation Sans',sans-serif;transform:scaleX(1.1434);transform-origin:0 0;">12 - 75 cl bottles</div>
<svg style="left:898.8px;top:588.1px" width="16" height="15"><path d="M0 1.6 H5.4 M9.6 1.6 H14.8 M1.8 1.6 L7.7 7.2 L13.3 1.6 M2.8 8.5 H12.4 M7.7 7.2 V13.6 M4 13.5 H11.2" fill="none" stroke="#111" stroke-width="1.25"/></svg>
<div id="r5c" class="t" style="right:288.47px;top:587.92px;font-size:17.5px;font-weight:normal;color:#111;font-family:'Liberation Sans',sans-serif;transform:scaleX(1.0887);transform-origin:100% 0;">264</div>
<div id="r5d" class="t" style="right:161.97px;top:587.92px;font-size:17.5px;font-weight:normal;color:#111;font-family:'Liberation Sans',sans-serif;transform:scaleX(1.0251);transform-origin:100% 0;">17</div>
<div id="r6a" class="t" style="left:257.88px;top:610.92px;font-size:17.5px;font-weight:normal;color:#111;font-family:'Liberation Sans',sans-serif;transform:scaleX(1.1171);transform-origin:0 0;">Chartreuse verte</div>
<div id="r6b" class="t" style="left:575.77px;top:610.92px;font-size:17.5px;font-weight:normal;color:#111;font-family:'Liberation Sans',sans-serif;transform:scaleX(1.1266);transform-origin:0 0;">750 cc per bottle</div>
<svg style="left:909.0px;top:611.1px" width="16" height="15"><path d="M0 1.6 H5.4 M9.6 1.6 H14.8 M1.8 1.6 L7.7 7.2 L13.3 1.6 M2.8 8.5 H12.4 M7.7 7.2 V13.6 M4 13.5 H11.2" fill="none" stroke="#111" stroke-width="1.25"/></svg>
<div id="r6c" class="t" style="right:288.47px;top:610.92px;font-size:17.5px;font-weight:normal;color:#111;font-family:'Liberation Sans',sans-serif;transform:scaleX(1.0941);transform-origin:100% 0;">18</div>
<div id="r6d" class="t" style="right:161.97px;top:610.92px;font-size:17.5px;font-weight:normal;color:#111;font-family:'Liberation Sans',sans-serif;transform:scaleX(1.0251);transform-origin:100% 0;">69</div>
<svg style="left:133px;top:205px" width="24" height="24"><path d="M8.5 19.5 H10.5 M8.5 19.5 L3.5 14 V12.5 L4.5 11.5 H6.5 L8.5 13.5 V14.5 M5.5 11 L4 9 V7.5 L5 6.5 H6.5 L10.5 10.5 M4.5 8.5 L7.5 11 M8.5 6 L8 5 V4.5 L9.5 3.5 H11 L14.5 9.5 M8.5 5.5 L10.5 8.5 V9.5 M14.5 9.5 V4.5 L15.5 3.5 H16.5 L17.5 4.5 V9.5 M17.5 5.5 H19.5 L20.5 6.5 V17.5 L19.5 18.5" fill="none" stroke="#000" stroke-width="1.1" stroke-linecap="square" stroke-linejoin="miter"/></svg>
<div class="a" style="left:59px;top:624px;width:1176px;height:16px;background:linear-gradient(#f3f2ec,#fcfcfa 50%,#f1f0ea);"></div>
<div class="a" style="left:59px;top:624px;width:16px;height:16px;background:#fbfbf9;border:1px solid #ebe9e0"></div>
<svg style="left:59px;top:624px" width="16" height="16"><path d="M9.5 4 v8 l-4 -4 z" fill="#c4c2b8"/></svg>
<div class="a" style="left:1218px;top:624px;width:16px;height:16px;background:#fbfbf9;border:1px solid #ebe9e0"></div>
<svg style="left:1218px;top:624px" width="16" height="16"><path d="M6.5 4 v8 l4 -4 z" fill="#c4c2b8"/></svg>
<div class="a" style="left:34px;top:640px;width:1201px;height:1px;background:#cbc7b4;"></div>
<div class="a" style="left:34px;top:641px;width:1201px;height:20px;background:linear-gradient(#f6f5ef,#ebe8d8 60%,#e6e3d0 95%,#efede2);"></div>
<div class="a" style="left:34px;top:661px;width:1201px;height:1px;background:#cdc7b0;"></div>
<div class="a" style="left:34px;top:662px;width:1201px;height:28px;background:#9cb8e8;"></div>
<div class="a" style="left:34px;top:687px;width:1201px;height:3px;background:#f4f4f4;"></div>
<div class="a" style="left:36px;top:668px;width:86px;height:20px;background:linear-gradient(#fbfbf8,#e9e6d8);border:1px solid #a8a494;border-right:none"></div>
<div class="a" style="left:121px;top:666px;width:63px;height:24px;background:#fff;border-right:1px solid #a8a494"></div>
<div class="a" style="left:121px;top:666px;width:62px;height:3px;background:linear-gradient(#f0a010,#f8c840 60%,#fff0b0);"></div>
<svg style="left:44px;top:671px" width="13" height="15"><path d="M.5 .5 h8.5 l3 3 v10.5 h-11.5 z" fill="#f6f8fc" stroke="#56647e" stroke-width="1"/><path d="M9 .5 v3 h3" fill="#dde4f0" stroke="#56647e" stroke-width=".8"/>
<g transform="translate(6,8.2)" fill="#a4a4cc"><circle r="3.2"/><rect x="-0.9" y="-4.3" width="1.8" height="8.6"/><rect x="-4.3" y="-0.9" width="8.6" height="1.8"/><rect x="-0.9" y="-4.3" width="1.8" height="8.6" transform="rotate(45)"/><rect x="-0.9" y="-4.3" width="1.8" height="8.6" transform="rotate(-45)"/></g><circle cx="6" cy="8.2" r="1.3" fill="#e8e8f4"/></svg>
<svg style="left:130px;top:669px" width="15" height="15"><rect x=".5" y=".5" width="13.3" height="13.3" rx="1.5" fill="#fafcff" stroke="#8aa0d8" stroke-width="1"/><rect x="0" y="0" width="1.5" height="1.5" fill="#283c78"/><rect x="12.8" y="0" width="1.5" height="1.5" fill="#283c78"/><rect x="0" y="12.8" width="1.5" height="1.5" fill="#283c78"/><rect x="12.8" y="12.8" width="1.5" height="1.5" fill="#283c78"/>
<path d="M3 3.3 h6 M4 5.4 h2.6" stroke="#1a8a2a" stroke-width="1.1"/><path d="M5.5 7.4 h-2 v4.2 h2" stroke="#1a8a2a" stroke-width="1.4" fill="none"/><path d="M8.3 7 v5 M10.6 7 v5 M7.2 8.5 h4.6 M7.2 10.5 h4.6" stroke="#1a8a2a" stroke-width="1.1"/></svg>
<div id="tdesc" class="t" style="left:62.73px;top:673.95px;font-size:11px;font-weight:normal;color:#000;font-family:'Liberation Sans',sans-serif;transform:scaleX(0.9637);transform-origin:0 0;">Description</div>
<div id="tcode" class="t" style="left:150.73px;top:672.15px;font-size:11px;font-weight:normal;color:#000;font-family:'Liberation Sans',sans-serif;transform:scaleX(0.9216);transform-origin:0 0;">Code</div>
</body></html>
